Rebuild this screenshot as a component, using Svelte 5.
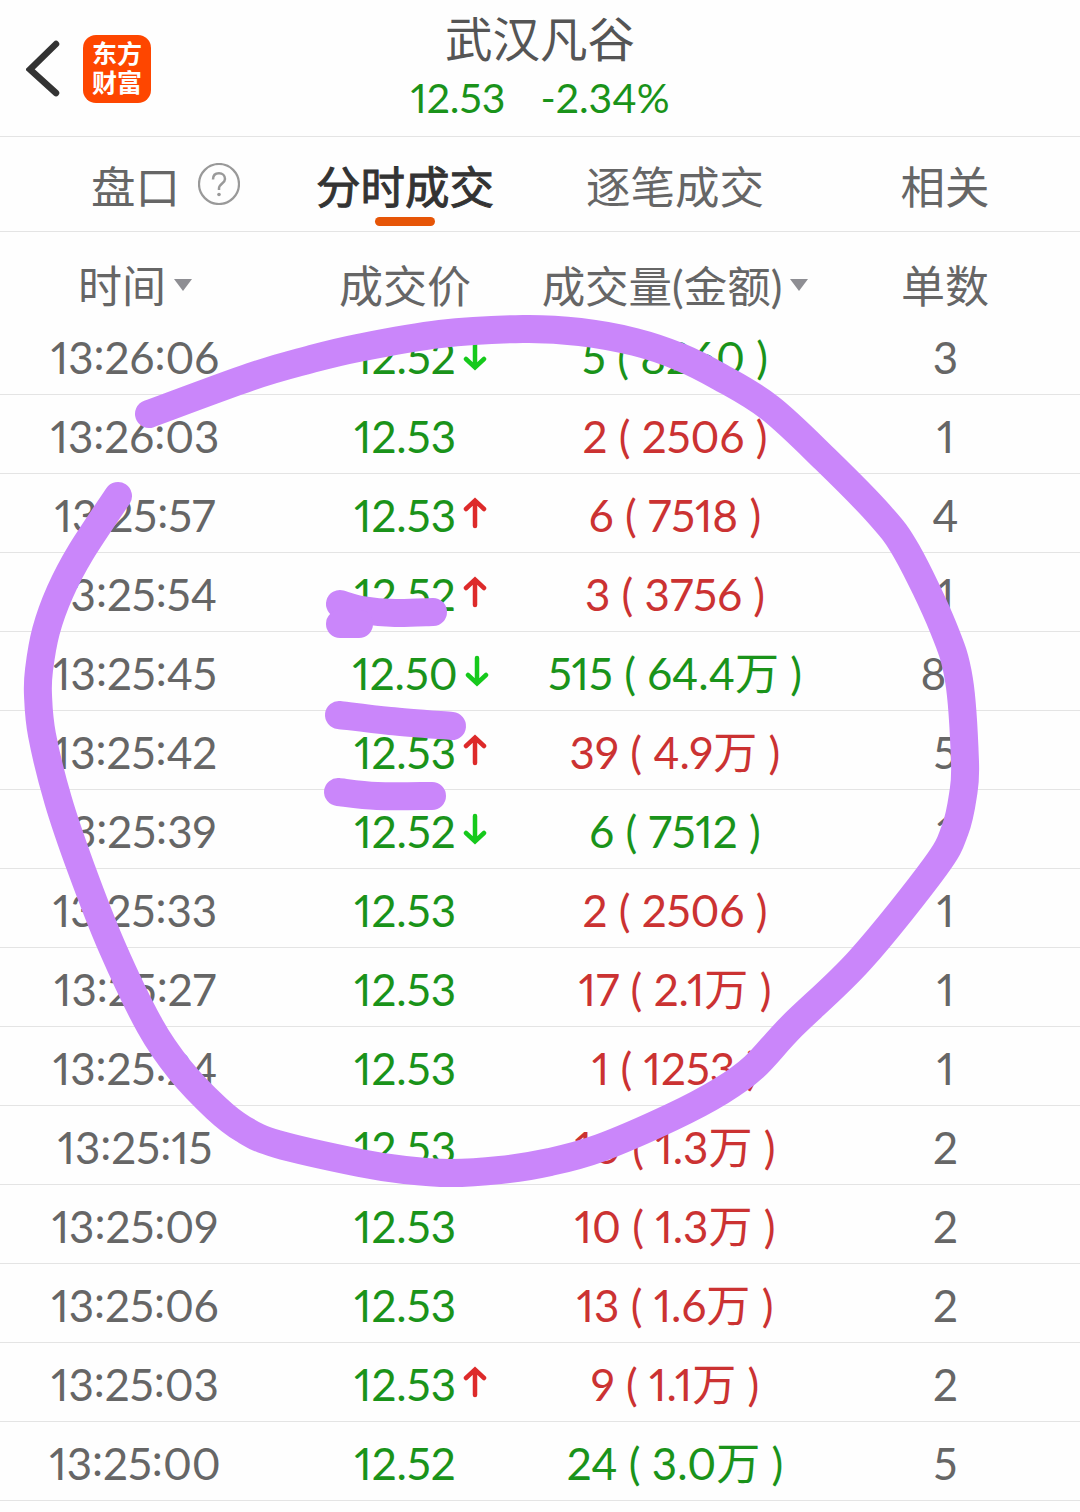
<script>
  const tabs = [
    { name: '盘口', help: true },
    { name: '分时成交', active: true },
    { name: '逐笔成交' },
    { name: '相关' }
  ];

  const rows = [
    { time: '13:26:06', price: '12.52', dir: 'down', vol: '5 ( 8260 )', side: 'sell', count: 3 },
    { time: '13:26:03', price: '12.53', dir: '', vol: '2 ( 2506 )', side: 'buy', count: 1 },
    { time: '13:25:57', price: '12.53', dir: 'up', vol: '6 ( 7518 )', side: 'buy', count: 4 },
    { time: '13:25:54', price: '12.52', dir: 'up', vol: '3 ( 3756 )', side: 'buy', count: 1 },
    { time: '13:25:45', price: '12.50', dir: 'down', vol: '515 ( 64.4万 )', side: 'sell', count: 83 },
    { time: '13:25:42', price: '12.53', dir: 'up', vol: '39 ( 4.9万 )', side: 'buy', count: 5 },
    { time: '13:25:39', price: '12.52', dir: 'down', vol: '6 ( 7512 )', side: 'sell', count: 1 },
    { time: '13:25:33', price: '12.53', dir: '', vol: '2 ( 2506 )', side: 'buy', count: 1 },
    { time: '13:25:27', price: '12.53', dir: '', vol: '17 ( 2.1万 )', side: 'buy', count: 1 },
    { time: '13:25:24', price: '12.53', dir: '', vol: '1 ( 1253 )', side: 'buy', count: 1 },
    { time: '13:25:15', price: '12.53', dir: '', vol: '10 ( 1.3万 )', side: 'buy', count: 2 },
    { time: '13:25:09', price: '12.53', dir: '', vol: '10 ( 1.3万 )', side: 'buy', count: 2 },
    { time: '13:25:06', price: '12.53', dir: '', vol: '13 ( 1.6万 )', side: 'buy', count: 2 },
    { time: '13:25:03', price: '12.53', dir: 'up', vol: '9 ( 1.1万 )', side: 'buy', count: 2 },
    { time: '13:25:00', price: '12.52', dir: '', vol: '24 ( 3.0万 )', side: 'sell', count: 5 }
  ];

  // pen strokes drawn over the list
  const strokes = [
    [[149, 414], [250, 377], [308, 360], [358, 348], [440, 334], [523, 329], [580, 332], [635, 342], [680, 357], [720, 377],
     [770, 408], [825, 459], [879, 514], [907, 552], [943, 627], [959, 680], [965, 762], [963, 795], [955, 830], [935, 867],
     [860, 960], [792, 1026], [754, 1067], [721, 1091], [672, 1117], [600, 1148], [550, 1162], [500, 1170], [450, 1173],
     [405, 1170], [360, 1163], [277, 1144], [243, 1129], [216, 1108], [180, 1070], [150, 1026], [112, 947], [81, 868],
     [58, 800], [42, 735], [38, 695], [39, 670], [46, 631], [60, 592], [81, 552], [118, 496]],
    [[340, 604], [362, 610], [395, 613], [433, 612]],
    [[340, 624], [359, 624]],
    [[339, 715], [390, 721], [452, 726]],
    [[338, 792], [377, 796], [432, 796]]
  ];

  function smooth(pts) {
    let d = `M${pts[0]}`;
    for (let i = 0; i < pts.length - 1; i++) {
      const a = pts[i - 1] || pts[i];
      const b = pts[i];
      const c = pts[i + 1];
      const e = pts[i + 2] || c;
      d += `C${b[0] + (c[0] - a[0]) / 6},${b[1] + (c[1] - a[1]) / 6} ${c[0] - (e[0] - b[0]) / 6},${c[1] - (e[1] - b[1]) / 6} ${c}`;
    }
    return d;
  }
</script>

<div class="page">
  <header>
    <div class="left">
      <svg class="back" width="34" height="58" viewBox="0 0 34 58">
        <path d="M30 4L4 29.500L30 53" fill="none" stroke="#333" stroke-width="6.500" stroke-linecap="round" />
      </svg>
      <div class="logo"><span>东方</span><span>财富</span></div>
    </div>
    <div class="stock">
      <div class="name">武汉凡谷</div>
      <div class="quote"><span>12.53</span><span>-2.34%</span></div>
    </div>
  </header>

  <nav>
    {#each tabs as tab}
      <div class="tab" class:active={tab.active} class:withHelp={tab.help}>
        <span>{tab.name}</span>
        {#if tab.help}
          <svg class="help" width="42" height="42" viewBox="0 0 42 42" fill="none" stroke="#999">
            <circle cx="21" cy="21" r="20" stroke-width="2.200" />
            <path d="M15 16.500C15 12.500 17.500 10.300 21 10.300S27 12.800 27 16C27 20.500 21 20.500 21 25.500V27" stroke-width="2.500" />
            <circle cx="21" cy="31.500" r="1.800" fill="#999" stroke="none" />
          </svg>
        {/if}
      </div>
    {/each}
  </nav>

  <div class="row head">
    <div class="cell">时间<i class="caret"></i></div>
    <div class="cell">成交价</div>
    <div class="cell amount">成交量(金额)<i class="caret"></i></div>
    <div class="cell">单数</div>
  </div>

  {#each rows as row}
    <div class="row">
      <div class="cell time">{#each row.time.split(':') as part, i}{#if i > 0}<span class="colon">:</span>{/if}{part}{/each}</div>
      <div class="cell price">
        <span class="value">{row.price}
          {#if row.dir}
            <svg class="arrow {row.dir}" width="24" height="32" viewBox="0 0 24 32">
              <path d="M12 29V4M3 12L12 3.500L21 12" />
            </svg>
          {/if}
        </span>
      </div>
      <div class="cell vol {row.side}">{row.vol}</div>
      <div class="cell count">{row.count}</div>
    </div>
  {/each}

  <svg class="ink" width="1080" height="1512" viewBox="0 0 1080 1512">
    {#each strokes as pts}
      <path d={smooth(pts)} />
    {/each}
  </svg>
</div>

<style>
  :global(body) {
    background: #fefefe;
  }

  .page {
    position: relative;
    width: 1080px;
    height: 1512px;
    overflow: hidden;
    background: #fefefe;
    color: #666;
    font-family: Lato, "Noto Sans CJK SC", sans-serif;
    font-size: 44px;
    font-variant-numeric: proportional-nums;
  }

  header {
    display: grid;
    grid-template-columns: 270px 540px 270px;
    height: 136px;
    border-bottom: 1px solid #e4e4e4;
  }

  .left {
    display: flex;
    align-items: center;
    padding-top: 1px;
    padding-left: 26px;
    gap: 23px;
  }

  .logo {
    display: flex;
    flex-direction: column;
    align-items: center;
    justify-content: center;
    width: 68px;
    height: 67px;
    padding-bottom: 1px;
    border-radius: 13px;
    background: #fe4600;
    color: #fff;
    font-size: 25px;
    font-weight: 700;
    line-height: 29px;
  }

  .stock {
    display: flex;
    flex-direction: column;
    align-items: center;
  }

  .name {
    margin-top: 9px;
    color: #555;
    font-size: 47.500px;
    line-height: 60px;
  }

  .quote {
    display: flex;
    gap: 35px;
    color: #1a931a;
    font-size: 41px;
    line-height: 58px;
  }

  nav {
    display: grid;
    grid-template-columns: repeat(4, 270px);
    height: 94px;
    border-bottom: 1px solid #e4e4e4;
  }

  .tab {
    position: relative;
    display: flex;
    align-items: center;
    justify-content: center;
    padding-top: 5px;
    font-size: 44.500px;
    line-height: 89px;
  }

  .withHelp {
    justify-content: flex-start;
    padding-left: 91px;
    gap: 18px;
  }

  .help {
    margin-top: -5px;
  }

  .active {
    color: #333;
    -webkit-text-stroke: 1px #333;
  }

  .active::after {
    content: '';
    position: absolute;
    bottom: 5px;
    left: 105px;
    width: 60px;
    height: 9px;
    border-radius: 5px;
    background: #e65507;
  }

  .row {
    display: grid;
    grid-template-columns: repeat(4, 270px);
    align-items: baseline;
    height: 78px;
    border-bottom: 1px solid #e4e4e4;
    line-height: 82px;
    white-space: pre;
  }

  .head {
    height: 84px;
    border-bottom: none;
    line-height: 109px;
  }

  .cell {
    text-align: center;
  }

  .colon {
    line-height: 0;
    vertical-align: 4px;
  }

  .count {
    letter-spacing: -1px;
  }

  .amount {
    font-size: 43.500px;
  }

  .caret {
    display: inline-block;
    margin-left: 8px;
    border: 9px solid transparent;
    border-top: 12px solid #8e8e93;
    border-bottom: none;
    vertical-align: 12px;
  }

  .price,
  .sell {
    color: #1a931a;
  }

  .buy {
    color: #cb3232;
  }

  .value {
    position: relative;
    white-space: normal;
  }

  .arrow {
    position: absolute;
    top: 8px;
    left: calc(100% + 7px);
    fill: none;
    stroke: #dd2a2a;
    stroke-width: 4.500;
    stroke-linecap: round;
  }

  .arrow.down {
    transform: rotate(180deg);
    stroke: #16c91c;
  }

  .ink {
    position: absolute;
    top: 0;
    left: 0;
    fill: none;
    stroke: #ca86fa;
    stroke-width: 28;
    stroke-linecap: round;
    stroke-linejoin: round;
  }
</style>
